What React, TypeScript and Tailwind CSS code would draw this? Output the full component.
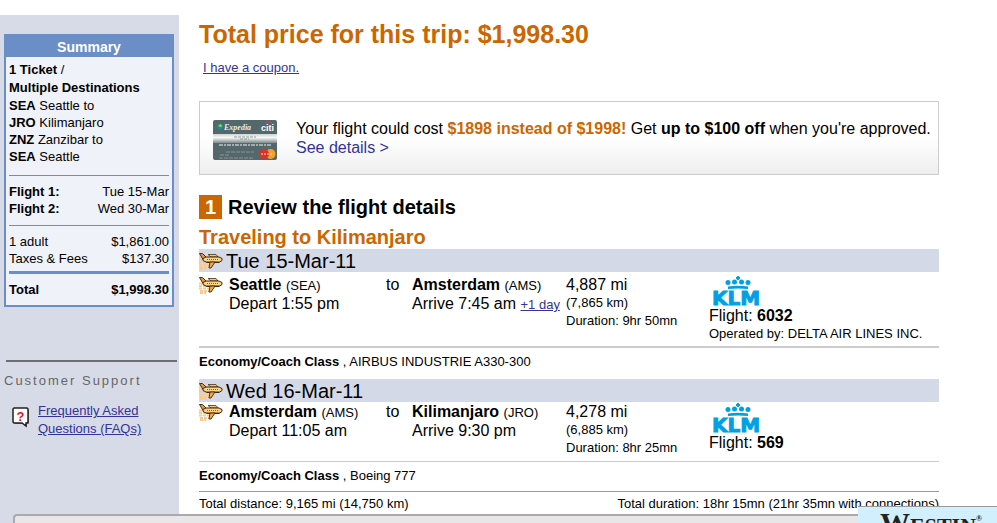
import type { ReactNode } from "react"

interface Leg {
  date: string
  from: string
  fromCode: string
  depart: string
  to: string
  toCode: string
  arrive: string
  nextDay?: boolean
  miles: string
  km: string
  duration: string
  flight: string
  operator?: string
  aircraft: string
}

const legs: Leg[] = [
  {
    date: "Tue 15-Mar-11",
    from: "Seattle",
    fromCode: "SEA",
    depart: "1:55 pm",
    to: "Amsterdam",
    toCode: "AMS",
    arrive: "7:45 am",
    nextDay: true,
    miles: "4,887 mi",
    km: "(7,865 km)",
    duration: "9hr 50mn",
    flight: "6032",
    operator: "DELTA AIR LINES INC.",
    aircraft: "AIRBUS INDUSTRIE A330-300",
  },
  {
    date: "Wed 16-Mar-11",
    from: "Amsterdam",
    fromCode: "AMS",
    depart: "11:05 am",
    to: "Kilimanjaro",
    toCode: "JRO",
    arrive: "9:30 pm",
    miles: "4,278 mi",
    km: "(6,885 km)",
    duration: "8hr 25mn",
    flight: "569",
    aircraft: "Boeing 777",
  },
]

const stops = [
  ["SEA", "Seattle to"],
  ["JRO", "Kilimanjaro"],
  ["ZNZ", "Zanzibar to"],
  ["SEA", "Seattle"],
]

function PlaneIcon() {
  return (
    <svg width="24" height="18" viewBox="0 0 24 18" className="block shrink-0" aria-hidden="true">
      {/* speed trails */}
      <path
        d="M0 7.500h9M0 10h10M0 12.500h11M1 15h9M1 17h6"
        stroke="#fbc98c"
        strokeWidth="2"
        strokeDasharray="3 1"
      />
      {/* far wing */}
      <path d="M9 2.500h8l2 2.500h-7z" fill="#f7c873" stroke="#4a3210" strokeWidth="0.800" />
      {/* tail */}
      <path d="M0.500 1.500h3l4 4v2H4z" fill="#e8923a" stroke="#4a3210" />
      {/* fuselage */}
      <path d="M4 6.500l3-1.500h13l3 1.500v2l-3 2H8l-4-2z" fill="#fad485" stroke="#3a2610" />
      <path d="M8 7.500h12" stroke="#8a6428" strokeDasharray="1 1" />
      <path d="M7 9.500h14" stroke="#cf7a24" />
      {/* near wing */}
      <path d="M11 10h5l-4 6h-2z" fill="#f2aa4c" stroke="#4a3210" />
    </svg>
  )
}

function KlmLogo() {
  return (
    <svg width="56" height="31" viewBox="0 0 56 31" className="block overflow-visible" role="img" aria-label="KLM">
      <g fill="#00a1e4">
        <path d="M26 1h2v1h1v2h-1v1h-2V4h-1V2h1z" />
        <circle cx="17" cy="7.500" r="2.500" />
        <circle cx="23.500" cy="7" r="2.500" />
        <circle cx="30.500" cy="7" r="2.500" />
        <circle cx="37" cy="7.500" r="2.500" />
        <path d="M17 11.500q10-1.500 20 0v2.500q-10-1-20 0z" />
        <text
          x="1"
          y="30"
          fontFamily="'DejaVu Sans', sans-serif"
          fontSize="20"
          fontWeight="700"
          stroke="#00a1e4"
          strokeWidth="1"
        >
          KLM
        </text>
      </g>
    </svg>
  )
}

function CreditCard() {
  return (
    <svg width="66" height="46" viewBox="0 -4 66 46" className="block shrink-0" aria-hidden="true">
      <defs>
        <linearGradient id="stripe" x1="0" y1="0" x2="0" y2="1">
          <stop offset="0" stopColor="#cfd3d4" />
          <stop offset="0.4" stopColor="#f6f6f6" />
          <stop offset="1" stopColor="#7d8a8b" />
        </linearGradient>
      </defs>
      <rect x="1" y="1" width="64" height="40" rx="2" fill="#54676a" />
      <rect x="1" y="15" width="64" height="9" fill="url(#stripe)" />
      <circle cx="8" cy="7.500" r="3" fill="#1f8f8a" />
      <path d="M6 7l3-2 1 3z" fill="#b8d84a" />
      <text x="12" y="11" fontFamily="'Liberation Serif', serif" fontSize="8" fontStyle="italic" fontWeight="700" fill="#e6eaea">
        Expedia
      </text>
      <text x="49" y="12" fontFamily="'Liberation Sans', sans-serif" fontSize="9" fontWeight="700" fill="#fff">
        citi
      </text>
      <path d="M53 4q4-3 7 0" stroke="#d8453c" fill="none" />
      <path d="M22 18h22M28 20h9" stroke="#939c9d" strokeDasharray="3 1" />
      <path d="M7 26h52" stroke="#a3adae" strokeWidth="2" strokeDasharray="4 1 2 1" />
      <path d="M14 33h28M8 36h9M7 39h34" stroke="#899697" strokeDasharray="4 1" />
      <circle cx="58.500" cy="35" r="5" fill="#f3a428" />
      <circle cx="52" cy="35" r="5" fill="#dd3226" />
      <path d="M49 35h12" stroke="#f9dcc0" strokeDasharray="2 1" />
    </svg>
  )
}

function HelpIcon() {
  return (
    <svg width="18" height="21" viewBox="0 0 18 21" className="mt-[5px] block shrink-0" aria-hidden="true">
      <path d="M3 3h14v14h-2v3l-4-3H3z" fill="#777" />
      <path d="M2 1h13l1 1v13l-1 1h-1v3l-4-3H2l-1-1V2z" fill="#fff" stroke="#222" strokeWidth="1.500" />
      <text x="4.500" y="13.500" fontFamily="'Liberation Sans', sans-serif" fontSize="13" fontWeight="700" fill="#e01020">
        ?
      </text>
    </svg>
  )
}

function Row({ label, children }: { label: string; children: ReactNode }) {
  return (
    <div className="flex justify-between">
      <dt>{label}</dt>
      <dd>{children}</dd>
    </div>
  )
}

function Sidebar() {
  return (
    <aside className="w-[179px] shrink-0 bg-[#d7dbe8] pt-[19px] text-[13px]">
      <section className="ml-1 mr-[5px] border-2 border-t-0 border-[#6b8ec6] bg-[#eff2f8] pb-[7px]">
        <h2 className="bg-[#6b8ec6] pt-1 text-center text-sm leading-[19px] font-bold text-white">Summary</h2>
        <div className="px-[3px] leading-[18px]">
          <p className="pt-1">
            <b>1 Ticket</b> /
          </p>
          <p className="font-bold">Multiple Destinations</p>
          <ul className="leading-[17px]">
            {stops.map(([code, city], i) => (
              <li key={i}>
                <b>{code}</b> {city}
              </li>
            ))}
          </ul>
          <dl className="mt-[10px] border-t border-[#6b8ec6] pt-[7px] pb-2 leading-[17px] [&_dt]:font-bold">
            <Row label="Flight 1:">Tue 15-Mar</Row>
            <Row label="Flight 2:">Wed 30-Mar</Row>
          </dl>
          <dl className="border-t border-[#6b8ec6] pt-[7px] pb-1 leading-[17px]">
            <Row label="1 adult">$1,861.00</Row>
            <Row label="Taxes & Fees">$137.30</Row>
          </dl>
          <dl className="border-t-[3px] border-[#6b8ec6] pt-[7px] leading-[17px] font-bold">
            <Row label="Total">$1,998.30</Row>
          </dl>
        </div>
      </section>

      <section className="mt-[53px] mr-[2px] ml-[6px] border-t-2 border-[#6b706e]">
        <h2 className="-ml-[2px] pt-[10px] leading-[18px] tracking-[2px] text-[#666]">Customer Support</h2>
        <div className="flex gap-2 pt-3 pl-[6px]">
          <HelpIcon />
          <a href="#faq" className="leading-[18px] text-[#333399] underline">
            Frequently Asked
            <br />
            Questions (FAQs)
          </a>
        </div>
      </section>
    </aside>
  )
}

function LegDetails({ leg, first }: { leg: Leg; first: boolean }) {
  return (
    <section>
      <h4 className="flex h-[23px] items-center gap-[3px] bg-[#d3d9e7] text-xl">
        <PlaneIcon />
        {leg.date}
      </h4>
      <table
        className={
          first
            ? "mt-[3px] w-full table-fixed text-left text-base leading-[19px]"
            : "w-full table-fixed text-left text-base leading-[19px]"
        }
      >
        <colgroup>
          <col className="w-[30px]" />
          <col className="w-[157px]" />
          <col className="w-[26px]" />
          <col className="w-[154px]" />
          <col className="w-[143px]" />
          <col />
        </colgroup>
        <tbody>
          <tr className="align-top">
            <td className="pt-px">
              <PlaneIcon />
            </td>
            <td>
              <b>{leg.from}</b> <span className="text-[13px] leading-none">({leg.fromCode})</span>
              <br />
              Depart {leg.depart}
            </td>
            <td>to</td>
            <td className="whitespace-nowrap">
              <b>{leg.to}</b> <span className="text-[13px] leading-none">({leg.toCode})</span>
              <br />
              Arrive {leg.arrive}{" "}
              {leg.nextDay && (
                <a href="#next-day" className="text-[13px] leading-none text-[#333399] underline">
                  +1 day
                </a>
              )}
            </td>
            <td>
              {leg.miles}
              <div className="text-[13px] leading-[18px]">
                {leg.km}
                <br />
                Duration: {leg.duration}
              </div>
            </td>
            <td>
              <div className="pl-[2px]">
                <KlmLogo />
              </div>
              Flight: <b>{leg.flight}</b>
              {leg.operator && <div className="text-[13px] leading-[17px]">Operated by: {leg.operator}</div>}
            </td>
          </tr>
        </tbody>
      </table>
    </section>
  )
}

export default function App() {
  return (
    <div className="relative flex h-screen overflow-hidden bg-white pt-[15px] font-['Liberation_Sans',Arial,sans-serif] text-black">
      <Sidebar />

      <main className="mr-[58px] ml-5 flex-1">
        <h1 className="pt-1 text-[25px] leading-[30px] font-bold text-[#cc6600]">
          Total price for this trip: $1,998.30
        </h1>
        <p className="mt-[11px] pl-1 text-[13px] leading-4">
          <a href="#coupon" className="text-[#333399] underline">
            I have a coupon.
          </a>
        </p>

        <div className="mt-[25px] flex h-[74px] items-center gap-[18px] border border-[#ccc] bg-linear-to-b from-white from-50% to-[#eee] pl-3 text-base leading-[19px]">
          <CreditCard />
          <p>
            Your flight could cost <b className="text-[#cc6600]">$1898 instead of $1998!</b> Get{" "}
            <b>up to $100 off</b> when you're approved.
            <br />
            <a href="#details" className="text-[#333399]">
              See details &gt;
            </a>
          </p>
        </div>

        <h2 className="mt-5 flex items-center text-xl leading-6 font-bold">
          <span className="mr-[6px] w-[23px] bg-[#cc6600] text-center text-white">1</span>
          Review the flight details
        </h2>
        <h3 className="mt-[6px] text-xl leading-6 font-bold text-[#cc6600]">Traveling to Kilimanjaro</h3>

        {legs.map((leg, i) => (
          <div key={leg.date}>
            <div className={i === 0 ? "pb-1" : "pt-2 pb-1"}>
              <LegDetails leg={leg} first={i === 0} />
            </div>
            <p
              className={
                i === 0
                  ? "border-t-2 border-[#ccc] pt-[5px] text-[13px] leading-[18px]"
                  : "border-t border-[#ccc] pt-[5px] pb-[6px] text-[13px] leading-[18px]"
              }
            >
              <b>Economy/Coach Class</b> , {leg.aircraft}
            </p>
          </div>
        ))}

        <div className="flex justify-between border-t border-[#999] pt-1 text-[13px] leading-4">
          <span>Total distance: 9,165 mi (14,750 km)</span>
          <span>Total duration: 18hr 15mn (21hr 35mn with connections)</span>
        </div>
      </main>

      <div className="absolute right-0 bottom-0 left-[13px] h-[9px] rounded-tl border-t-2 border-l-2 border-[#aaa] bg-[#e8e6e6]" />
      <div className="absolute right-0 bottom-0 h-[17px] w-[139px] overflow-hidden border-t border-[#999] bg-[#d1effc] pt-1 pl-[22px] font-['Liberation_Serif',serif] text-[30px] leading-6 font-bold text-[#222]">
        W<span className="text-[22px]">ESTIN</span>
        <span className="align-top text-[8px] leading-4">®</span>
      </div>
    </div>
  )
}
